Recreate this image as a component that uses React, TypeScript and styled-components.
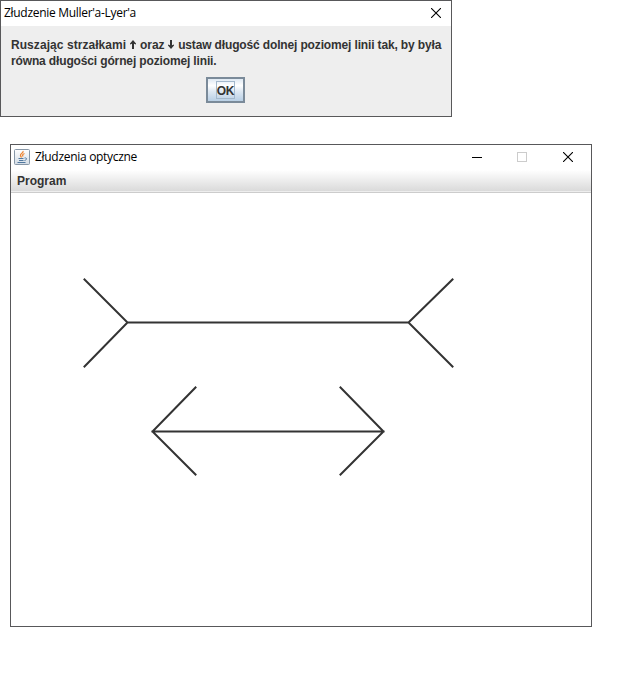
import React from "react";
import styled, { createGlobalStyle } from "styled-components";

const GlobalStyle = createGlobalStyle`
  * { box-sizing: border-box; }
  body { margin: 0; background: #fff; }
`;

const Desktop = styled.main`
  display: flex;
  flex-direction: column;
  align-items: flex-start;
  gap: 27px;
  width: 632px;
  height: 692px;
  overflow: hidden;
  background: #fff;
  color: #333;
  font: bold 12px/16px "Liberation Sans", Arial, sans-serif;
`;

const Frame = styled.section<{ $width: number; $height: number; $left?: number; $bg: string }>`
  display: flex;
  flex-direction: column;
  width: ${(p) => p.$width}px;
  height: ${(p) => p.$height}px;
  margin-left: ${(p) => p.$left ?? 0}px;
  border: 1px solid #58585a;
  background: ${(p) => p.$bg};
`;

const TitleBar = styled.header`
  display: flex;
  align-items: center;
  flex: none;
  height: 25px;
  padding: 0 0 1px 3px;
  background: #fff;
  color: #000;
`;

const Title = styled.h1<{ $spacing: number }>`
  flex: 1;
  margin: 0;
  font: 400 12px/16px "Open Sans", "Noto Sans", sans-serif;
  letter-spacing: ${(p) => p.$spacing}px;
  white-space: nowrap;
`;

const Controls = styled.div<{ $right: number }>`
  display: flex;
  gap: 35px;
  padding-right: ${(p) => p.$right}px;
`;

const ControlButton = styled.button`
  display: flex;
  width: 10px;
  height: 10px;
  padding: 0;
  border: 0;
  background: none;
  color: #000;

  &:last-child {
    margin-left: 1px;
  }
`;

const DialogBody = styled.div`
  display: flex;
  flex-direction: column;
  align-items: center;
  gap: 8px;
  padding: 11px 0 0 10px;
`;

const Message = styled.p`
  align-self: stretch;
  margin: 0;
  white-space: nowrap;
`;

const Phrase = styled.span<{ $spacing: number }>`
  letter-spacing: ${(p) => p.$spacing}px;
`;

const ArrowIcon = styled.svg`
  width: 6px;
  height: 9px;
  margin: 0 1px 0 0;
`;

const OkButton = styled.button`
  display: flex;
  align-items: center;
  justify-content: center;
  width: 39px;
  height: 26px;
  margin-right: 11px;
  padding: 0;
  border: 2px solid #7a8a99;
  background: linear-gradient(#dfe9f3 0%, #fff 30%, #dfe9f3 55%, #b8cfe5 100%);
  color: #333;
  font: inherit;
`;

const FocusLabel = styled.span`
  display: flex;
  justify-content: center;
  width: 19px;
  height: 18px;
  border: 1px solid #a3b8cc;
  line-height: 18px;
  letter-spacing: -0.3px;
`;

const JavaIcon = styled.svg`
  width: 16px;
  height: 16px;
  margin-right: 5px;
`;

const MenuBar = styled.nav`
  flex: none;
  height: 23px;
  padding: 3px 6px 0;
  border-bottom: 1px solid #ccc;
  background: linear-gradient(#fff, #dadada 21px, #eee 21px);
`;

const Canvas = styled.svg`
  display: block;
  width: 580px;
  height: 433px;
`;

const CloseButton = () => (
  <ControlButton aria-label="Zamknij">
    <svg width="10" height="10" viewBox="0 0 10 10">
      <path d="M0 0L10 10M10 0L0 10" stroke="currentColor" strokeWidth="1.100" />
    </svg>
  </ControlButton>
);

const Arrow = ({ down = false }: { down?: boolean }) => (
  <ArrowIcon viewBox="0 0 6 9" role="img" aria-label={down ? "w dół" : "w górę"}>
    <g transform={down ? "rotate(180 3 4.500)" : undefined}>
      <path d="M3 0L6 3.500V4.500L4 3.700V9H2V3.700L0 4.500V3.500Z" fill="#333" />
    </g>
  </ArrowIcon>
);

export default function App() {
  return (
    <Desktop>
      <GlobalStyle />
      <Frame $width={452} $height={117} $bg="#eee">
        <TitleBar>
          <Title $spacing={-0.3}>Złudzenie Muller'a-Lyer'a</Title>
          <Controls $right={10}>
            <CloseButton />
          </Controls>
        </TitleBar>
        <DialogBody>
          <Message>
            <Phrase $spacing={0.06}>Ruszając strzałkami </Phrase>
            <Arrow />
            <Phrase $spacing={0}> oraz </Phrase>
            <Arrow down />
            <Phrase $spacing={-0.145}> ustaw długość dolnej poziomej linii tak, by była</Phrase>
            <br />
            <Phrase $spacing={-0.14}>równa długości górnej poziomej linii.</Phrase>
          </Message>
          <OkButton>
            <FocusLabel>OK</FocusLabel>
          </OkButton>
        </DialogBody>
      </Frame>

      <Frame $width={582} $height={483} $left={10} $bg="#fff">
        <TitleBar>
          <JavaIcon viewBox="0 0 16 16">
            <defs>
              <linearGradient id="tile" x2="0" y2="1">
                <stop stopColor="#fff" />
                <stop offset="1" stopColor="#d3dce5" />
              </linearGradient>
            </defs>
            <rect x=".5" y=".5" width="15" height="15" rx="1" fill="url(#tile)" stroke="#8797a7" />
            <path d="M9 2C10 4 6 4.500 6.500 6.500C6.700 7.500 7.500 8 7.500 8.500M10.500 4.500C8 5.500 8.500 6.500 9 7.500" fill="none" stroke="#ee8430" strokeWidth="1.300" />
            <path d="M4.500 9.500H9.500M5 11.500H9.500M3.500 13.500H11.500M10.500 9C13.500 8.500 13 11 10.500 11.500" fill="none" stroke="#51789f" />
          </JavaIcon>
          <Title $spacing={-0.3}>Złudzenia optyczne</Title>
          <Controls $right={18}>
            <ControlButton aria-label="Minimalizuj">
              <svg width="10" height="10">
                <path d="M0 5.500H10" stroke="currentColor" />
              </svg>
            </ControlButton>
            <ControlButton aria-label="Maksymalizuj" disabled>
              <svg width="10" height="10">
                <rect x=".5" y=".5" width="9" height="9" fill="none" stroke="#ccc" />
              </svg>
            </ControlButton>
            <CloseButton />
          </Controls>
        </TitleBar>
        <MenuBar>Program</MenuBar>
        <Canvas viewBox="11 193 580 433" fill="none" stroke="#333" strokeWidth="2">
          <path d="M84.500 279.500L127.500 322.500L84.500 366.500M127.500 322.500H408.500M452.500 279.500L408.500 322.500L452.500 366.500" strokeLinecap="square" />
          <path d="M195.500 387.500L152.500 431.500L195.500 474.500M152.500 431.500H383.500M340.500 387.500L383.500 431.500L340.500 474.500" strokeLinecap="square" />
        </Canvas>
      </Frame>
    </Desktop>
  );
}
